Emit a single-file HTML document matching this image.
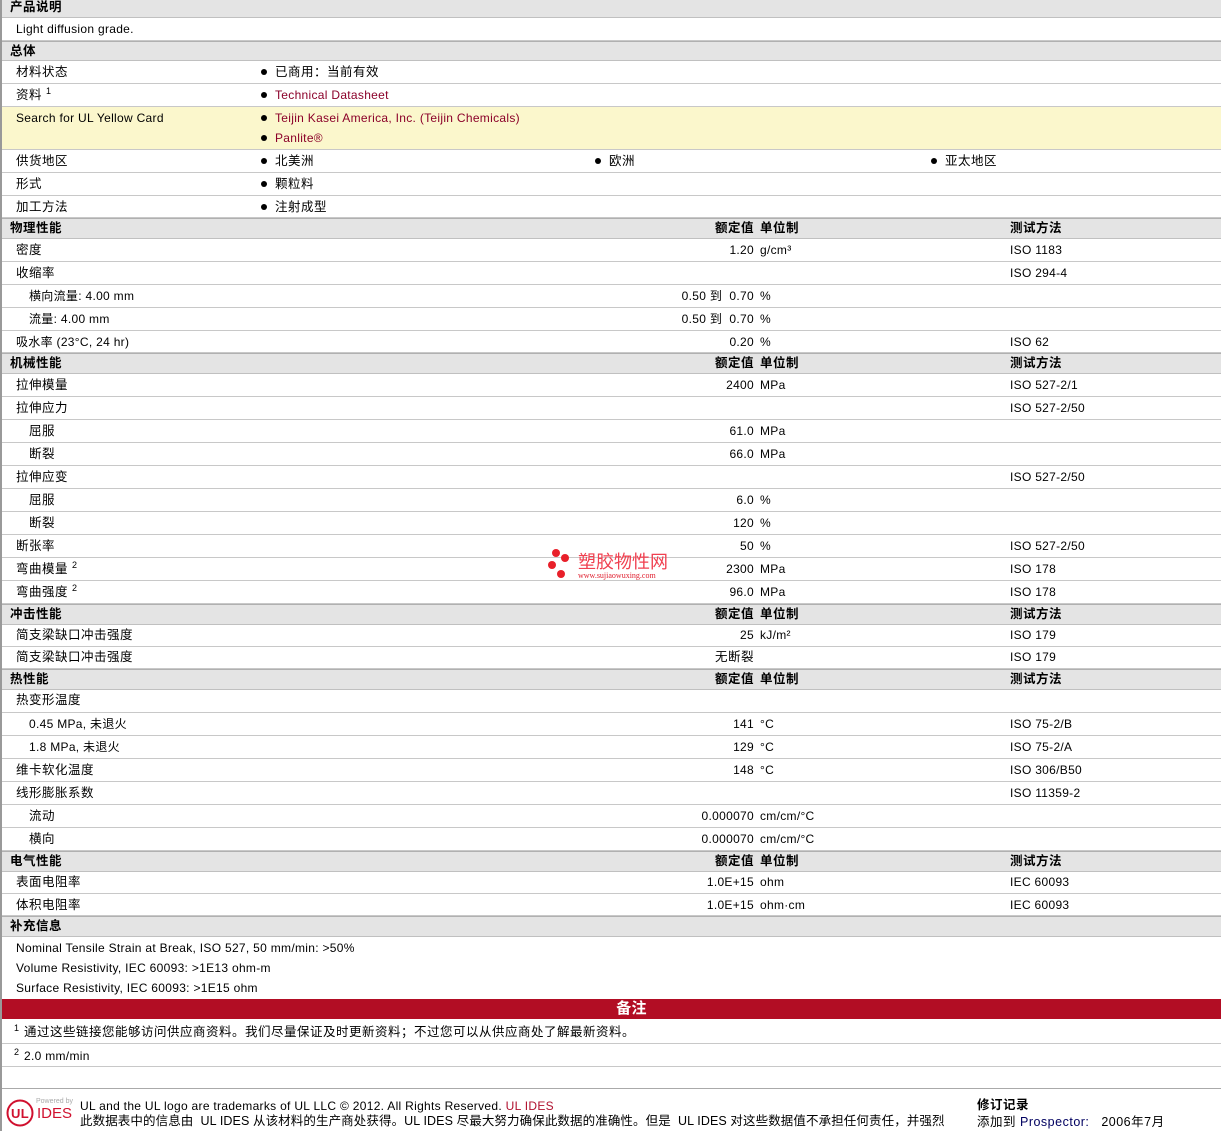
<!DOCTYPE html>
<html><head><meta charset="utf-8">
<style>
*{margin:0;padding:0;box-sizing:border-box}
body{width:1221px;height:1131px;background:#fff;position:relative;overflow:hidden;font-family:"Liberation Sans","Noto Sans CJK SC",sans-serif;font-size:12px;letter-spacing:.3px;color:#000}
.r{position:absolute;left:2px;width:1219px;border-bottom:1px solid #c8c8c8;background:#fff}
.h{background:#e4e4e4;border-top:1px solid #b0b0b0;font-weight:bold;border-bottom:1px solid #c0c0c0}
.r span{position:absolute;white-space:nowrap}
.l{left:14px}.l2{left:27px}.hl{left:8px}
.v{right:467px;text-align:right}
.u{left:758px}.t{left:1008px}
.a{color:#8b0029}
.c{font-size:12.5px;letter-spacing:.5px}
.bu::before{content:"";position:absolute;left:-14px;top:50%;margin-top:-3px;width:6px;height:6px;border-radius:50%;background:#000}
sup{font-size:9px;vertical-align:top;position:relative;top:-4px}
#lb{position:absolute;left:0;top:0;width:2px;height:1131px;background:#999}
</style></head><body>
<div id="lb"></div>
<div class="r h" style="top:0;height:18px;line-height:15px;border-top:none"><span class="hl c">产品说明</span></div>
<div class="r" style="top:18px;height:23px;line-height:22px"><span class="l">Light diffusion grade.</span></div>
<div class="r h" style="top:41px;height:20px;line-height:18px"><span class="hl c">总体</span></div>
<div class="r" style="top:61px;height:23px;line-height:22px"><span class="l c">材料状态</span><span class="bu c" style="left:273px">已商用：当前有效</span></div>
<div class="r" style="top:84px;height:23px;line-height:22px"><span class="l c">资料 <sup>1</sup></span><span class="bu a" style="left:273px">Technical Datasheet</span></div>
<div class="r" style="top:107px;height:43px;background:#fbf7cc"><span class="l" style="top:2px;line-height:18px">Search for UL Yellow Card</span><span class="bu a" style="left:273px;top:2px;line-height:18px">Teijin Kasei America, Inc. (Teijin Chemicals)</span><span class="bu a" style="left:273px;top:22px;line-height:18px">Panlite®</span></div>
<div class="r" style="top:150px;height:23px;line-height:22px"><span class="l c">供货地区</span><span class="bu c" style="left:273px">北美洲</span><span class="bu c" style="left:607px">欧洲</span><span class="bu c" style="left:943px">亚太地区</span></div>
<div class="r" style="top:173px;height:23px;line-height:22px"><span class="l c">形式</span><span class="bu c" style="left:273px">颗粒料</span></div>
<div class="r" style="top:196px;height:22px;line-height:22px"><span class="l c">加工方法</span><span class="bu c" style="left:273px">注射成型</span></div>

<div class="r h" style="top:218px;height:21px;line-height:19px"><span class="hl c">物理性能</span><span class="v c">额定值</span><span class="u c">单位制</span><span class="t c">测试方法</span></div>
<div class="r" style="top:239px;height:23px;line-height:22px"><span class="l c">密度</span><span class="v">1.20</span><span class="u">g/cm³</span><span class="t">ISO 1183</span></div>
<div class="r" style="top:262px;height:23px;line-height:22px"><span class="l c">收缩率</span><span class="t">ISO 294-4</span></div>
<div class="r" style="top:285px;height:23px;line-height:22px"><span class="l2">横向流量: 4.00 mm</span><span class="v">0.50 到&nbsp; 0.70</span><span class="u">%</span></div>
<div class="r" style="top:308px;height:23px;line-height:22px"><span class="l2">流量: 4.00 mm</span><span class="v">0.50 到&nbsp; 0.70</span><span class="u">%</span></div>
<div class="r" style="top:331px;height:22px;line-height:22px"><span class="l">吸水率 (23°C, 24 hr)</span><span class="v">0.20</span><span class="u">%</span><span class="t">ISO 62</span></div>

<div class="r h" style="top:353px;height:21px;line-height:19px"><span class="hl c">机械性能</span><span class="v c">额定值</span><span class="u c">单位制</span><span class="t c">测试方法</span></div>
<div class="r" style="top:374px;height:23px;line-height:22px"><span class="l c">拉伸模量</span><span class="v">2400</span><span class="u">MPa</span><span class="t">ISO 527-2/1</span></div>
<div class="r" style="top:397px;height:23px;line-height:22px"><span class="l c">拉伸应力</span><span class="t">ISO 527-2/50</span></div>
<div class="r" style="top:420px;height:23px;line-height:22px"><span class="l2 c">屈服</span><span class="v">61.0</span><span class="u">MPa</span></div>
<div class="r" style="top:443px;height:23px;line-height:22px"><span class="l2 c">断裂</span><span class="v">66.0</span><span class="u">MPa</span></div>
<div class="r" style="top:466px;height:23px;line-height:22px"><span class="l c">拉伸应变</span><span class="t">ISO 527-2/50</span></div>
<div class="r" style="top:489px;height:23px;line-height:22px"><span class="l2 c">屈服</span><span class="v">6.0</span><span class="u">%</span></div>
<div class="r" style="top:512px;height:23px;line-height:22px"><span class="l2 c">断裂</span><span class="v">120</span><span class="u">%</span></div>
<div class="r" style="top:535px;height:23px;line-height:22px"><span class="l c">断张率</span><span class="v">50</span><span class="u">%</span><span class="t">ISO 527-2/50</span></div>
<div class="r" style="top:558px;height:23px;line-height:22px"><span class="l c">弯曲模量 <sup>2</sup></span><span class="v">2300</span><span class="u">MPa</span><span class="t">ISO 178</span></div>
<div class="r" style="top:581px;height:23px;line-height:22px"><span class="l c">弯曲强度 <sup>2</sup></span><span class="v">96.0</span><span class="u">MPa</span><span class="t">ISO 178</span></div>

<div class="r h" style="top:604px;height:21px;line-height:19px"><span class="hl c">冲击性能</span><span class="v c">额定值</span><span class="u c">单位制</span><span class="t c">测试方法</span></div>
<div class="r" style="top:625px;height:22px;line-height:21px"><span class="l c">简支梁缺口冲击强度</span><span class="v">25</span><span class="u">kJ/m²</span><span class="t">ISO 179</span></div>
<div class="r" style="top:647px;height:22px;line-height:20px"><span class="l c">简支梁缺口冲击强度</span><span class="v c">无断裂</span><span class="t">ISO 179</span></div>

<div class="r h" style="top:669px;height:21px;line-height:19px"><span class="hl c">热性能</span><span class="v c">额定值</span><span class="u c">单位制</span><span class="t c">测试方法</span></div>
<div class="r" style="top:690px;height:23px;line-height:20px"><span class="l c">热变形温度</span></div>
<div class="r" style="top:713px;height:23px;line-height:22px"><span class="l2">0.45 MPa, 未退火</span><span class="v">141</span><span class="u">°C</span><span class="t">ISO 75-2/B</span></div>
<div class="r" style="top:736px;height:23px;line-height:22px"><span class="l2">1.8 MPa, 未退火</span><span class="v">129</span><span class="u">°C</span><span class="t">ISO 75-2/A</span></div>
<div class="r" style="top:759px;height:23px;line-height:22px"><span class="l c">维卡软化温度</span><span class="v">148</span><span class="u">°C</span><span class="t">ISO 306/B50</span></div>
<div class="r" style="top:782px;height:23px;line-height:22px"><span class="l c">线形膨胀系数</span><span class="t">ISO 11359-2</span></div>
<div class="r" style="top:805px;height:23px;line-height:22px"><span class="l2 c">流动</span><span class="v">0.000070</span><span class="u">cm/cm/°C</span></div>
<div class="r" style="top:828px;height:23px;line-height:22px"><span class="l2 c">横向</span><span class="v">0.000070</span><span class="u">cm/cm/°C</span></div>

<div class="r h" style="top:851px;height:21px;line-height:18px"><span class="hl c">电气性能</span><span class="v c">额定值</span><span class="u c">单位制</span><span class="t c">测试方法</span></div>
<div class="r" style="top:872px;height:22px;line-height:20px"><span class="l c">表面电阻率</span><span class="v">1.0E+15</span><span class="u">ohm</span><span class="t">IEC 60093</span></div>
<div class="r" style="top:894px;height:22px;line-height:22px"><span class="l c">体积电阻率</span><span class="v">1.0E+15</span><span class="u">ohm·cm</span><span class="t">IEC 60093</span></div>

<div class="r h" style="top:916px;height:21px;line-height:19px"><span class="hl c">补充信息</span></div>
<div class="r" style="top:937px;height:62px;border:none"><span class="l" style="top:2px;line-height:18px">Nominal Tensile Strain at Break, ISO 527, 50 mm/min: &gt;50%</span><span class="l" style="top:22px;line-height:18px">Volume Resistivity, IEC 60093: &gt;1E13 ohm-m</span><span class="l" style="top:42px;line-height:18px">Surface Resistivity, IEC 60093: &gt;1E15 ohm</span></div>
<div class="r" style="top:999px;height:20px;background:#b20d24;color:#fff;font-size:15px;line-height:19px;text-align:center;font-weight:bold;border:none;padding-left:40px">备注</div>
<div class="r" style="top:1019px;height:25px;line-height:26px"><span style="left:12px;top:-4px;font-size:9px">1</span><span class="c" style="left:22px">通过这些链接您能够访问供应商资料。我们尽量保证及时更新资料；不过您可以从供应商处了解最新资料。</span></div>
<div class="r" style="top:1044px;height:23px;line-height:24px"><span style="left:12px;top:-4px;font-size:9px">2</span><span style="left:22px">2.0 mm/min</span></div>
<div class="r" style="top:1067px;height:22px;border-bottom:1px solid #aaa"></div>

<svg style="position:absolute;left:5px;top:1098px" width="30" height="30" viewBox="0 0 30 30"><circle cx="15" cy="15" r="12.5" fill="none" stroke="#d0102e" stroke-width="2"/><text x="15" y="20" text-anchor="middle" font-family="Liberation Sans" font-weight="bold" font-size="13" fill="#d0102e">UL</text></svg>
<div style="position:absolute;left:36px;top:1098px;font-size:7px;color:#aaa;letter-spacing:0">Powered by</div>
<div style="position:absolute;left:37px;top:1105px;font-size:15px;color:#d0102e;letter-spacing:0">IDES</div>
<div style="position:absolute;left:80px;top:1099px;line-height:15px;white-space:nowrap">UL and the UL logo are trademarks of UL LLC © 2012. All Rights Reserved. <span style="color:#b0102e">UL IDES</span><br><span style="font-size:12.5px;letter-spacing:.1px">此数据表中的信息由&nbsp; UL IDES 从该材料的生产商处获得。UL IDES 尽最大努力确保此数据的准确性。但是&nbsp; UL IDES 对这些数据值不承担任何责任，并强烈</span></div>
<div class="c" style="position:absolute;left:977px;top:1097px;font-weight:bold;line-height:16px">修订记录</div>
<div class="c" style="position:absolute;left:977px;top:1114px;line-height:16px;white-space:nowrap">添加到 <span style="color:#000060">Prospector:</span>&nbsp;&nbsp; 2006年7月</div>

<div style="position:absolute;left:548px;top:549px;width:34px;height:32px">
<div style="position:absolute;left:4px;top:0;width:8px;height:8px;border-radius:50%;background:#e8202a"></div>
<div style="position:absolute;left:13px;top:5px;width:8px;height:8px;border-radius:50%;background:#e8202a"></div>
<div style="position:absolute;left:0;top:12px;width:8px;height:8px;border-radius:50%;background:#e8202a"></div>
<div style="position:absolute;left:9px;top:21px;width:8px;height:8px;border-radius:50%;background:#e8202a"></div>
</div>
<div style="position:absolute;left:578px;top:551px;font-size:18px;color:#f04050;line-height:20px;letter-spacing:0;font-family:'Noto Sans CJK SC',sans-serif">塑胶物性网</div>
<div style="position:absolute;left:578px;top:571px;font-size:8px;color:#e02030;letter-spacing:0;font-family:'Liberation Serif',serif">www.sujiaowuxing.com</div>
</body></html>
